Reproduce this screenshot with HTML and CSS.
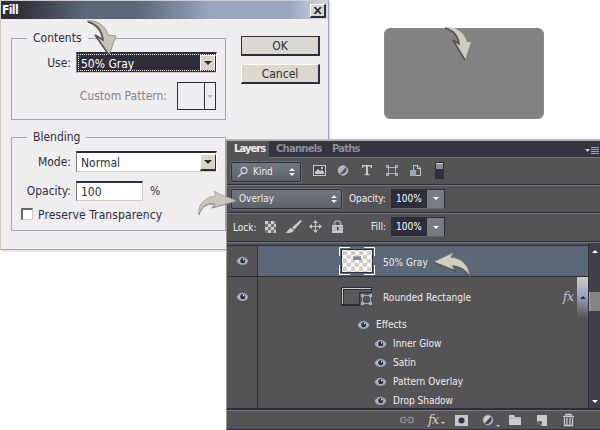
FILE: index.html
```
<!DOCTYPE html>
<html lang="en">
<head>
<meta charset="utf-8">
<title>Fill</title>
<link rel="stylesheet" href="styles.css">
</head>
<body>
<svg class="defs" width="0" height="0">
  <defs>
    <symbol id="eye" viewBox="0 0 13 10">
      <path d="M.5 5C2 1.800 4.200 .8 6.600 .8S11 1.800 12.500 5C11 8 9 9 6.600 9S2 8 .5 5Z" fill="#98a4b5"/>
      <path d="M2 5C3 3 4.500 2.600 6.500 2.600S10 3.300 11 5C10 7 8.500 7.700 6.500 7.700S3 7 2 5Z" fill="#b9bdc4"/>
      <circle cx="6.700" cy="4.700" r="2.500" fill="#2e2d3b"/>
      <rect x="7" y="3" width="1.300" height="1.300" fill="#fff"/>
    </symbol>
    <symbol id="updown" viewBox="0 0 6 8">
      <path d="M0 3L3 0L6 3ZM0 5L3 8L6 5Z" fill="#efedf0"/>
    </symbol>
  </defs>
</svg>
<main class="desktop">
  <div class="swatch"></div>

  <section class="dialog">
    <header class="titlebar"><b>Fill</b><button class="close"><svg width="8" height="7"><path d="M.5 0L7 7M7 0L.5 7" stroke="#2e2d3b" stroke-width="1.800"/></svg></button></header>
    <div class="dialog-body">
      <div class="groups">
        <div class="group contents">
          <span class="legend">Contents</span>
          <div class="field">
            <label class="use">Use:</label>
            <div class="select picked"><span>50% Gray</span><i class="drop"></i></div>
          </div>
          <div class="field pattern">
            <label class="custom">Custom Pattern:</label>
            <div class="pattern-box"><i></i><i class="pattern-drop"></i></div>
          </div>
        </div>
        <div class="group blending">
          <span class="legend blend">Blending</span>
          <div class="field mode-row">
            <label class="mode">Mode:</label>
            <div class="select"><span>Normal</span><i class="drop"></i></div>
          </div>
          <div class="field opacity-row">
            <label class="opac">Opacity:</label>
            <div class="input">100</div><span class="percent">%</span>
          </div>
          <div class="check"><i></i><span>Preserve Transparency</span></div>
        </div>
      </div>
      <div class="buttons">
        <button class="ok">OK</button>
        <button class="cancel">Cancel</button>
      </div>
    </div>
  </section>

  <section class="panel">
    <nav class="tabs">
      <span class="active">Layers</span><span class="channels">Channels</span><span class="paths">Paths</span>
      <svg width="15" height="9"><path d="M0 2H5L2.500 5Z" fill="#d0ccc0"/><path d="M6 .5H14M6 2.500H14M6 4.500H14M6 6.500H14" stroke="#98a6c0"/></svg>
    </nav>
    <div class="bar filter">
      <div class="combo kind">
        <svg width="12" height="12"><circle cx="7" cy="4.500" r="3" fill="none" stroke="#d0d2d8" stroke-width="1.300"/><path d="M5 7L1 11" stroke="#d0d2d8" stroke-width="1.500"/></svg>
        <span>Kind</span><svg class="ud" width="6" height="8"><use href="#updown"/></svg>
      </div>
      <svg class="filters" width="140" height="20">
        <rect x=".5" y="4.500" width="12" height="10" fill="#484955" stroke="#c5c6c8"/><path d="M2 13V11L5 8L7 10L9 9L11 11V13Z" fill="#c5c6c8"/><rect x="8" y="6" width="2" height="2" fill="#c5c6c8"/>
        <circle cx="30" cy="9.500" r="4.700" fill="#aeb4c0" stroke="#bcc0c8"/><path d="M33 6A5 5 0 0 1 27 13Z" fill="#555560"/>
        <path d="M49 4H59V7H58L57.500 5.500H55V13H56.500V14.200H51.500V13H53V5.500H50.500L50 7H49Z" fill="#c9c7c2"/>
        <path d="M75.500 6.500H82.500V12.500H75.500Z" fill="none" stroke="#a7aeba"/><path d="M73.500 4.500H75.500V6.500H73.500ZM82.500 4.500H84.500V6.500H82.500ZM73.500 12.500H75.500V14.500H73.500ZM82.500 12.500H84.500V14.500H82.500Z" fill="#555355" stroke="#c7c5c0"/>
        <path d="M100.500 4.500H105L107.500 7V14.500H100.500ZM104.500 4.500V7.500H107.500" fill="none" stroke="#c5c6c8"/><rect x="97" y="9" width="6" height="6" fill="#98a6c0"/>
        <rect x="122" y="1" width="9" height="17" fill="#30303c"/><path d="M123 2H130V8H123Z" fill="#8d8c90"/><path d="M123 2.500H130" stroke="#d0ccc0"/>
      </svg>
    </div>
    <div class="bar blend-bar">
      <div class="combo overlay"><span>Overlay</span><svg class="ud" width="6" height="8"><use href="#updown"/></svg></div>
      <label class="p-opacity">Opacity:</label>
      <div class="value"><span>100%</span><i></i></div>
    </div>
    <div class="bar lock-bar">
      <label class="lock">Lock:</label>
      <svg class="locks" width="82" height="20">
        <rect x="2" y="4" width="11" height="12" fill="#73757c"/><path d="M2 4H5V7H2ZM8 4H11V7H8ZM5 7H8V10H5ZM11 7H13V10H11ZM2 10H5V13H2ZM8 10H11V13H8ZM5 13H8V16H5ZM11 13H13V16H11Z" fill="#d0ccc0"/>
        <path d="M37.500 3L39 4L31.500 12.500L29 10.500Z" fill="#c9cace"/><path d="M28 11L31 13C30 16 26 16.500 22 15.500C25 15 25 12 28 11Z" fill="#d0ccc0"/>
        <path d="M52.500 4V15M46.500 9.500H58.500" stroke="#c5c6c8"/><path d="M50 6L52.500 3L55 6ZM50 13L52.500 16L55 13ZM49 7V12L46 9.500ZM56 7V12L59 9.500Z" fill="#c5c6c8"/>
        <path d="M71.500 9V6Q71.500 4 74.500 4T77.500 6V9" fill="none" stroke="#98a6c0" stroke-width="1.700"/><rect x="69" y="8" width="11" height="8" fill="#c9c7c2"/><path d="M69 10H80M69 13H80" stroke="#98a6c0"/><path d="M74 10H75.500V13H74Z" fill="#2e2d3b"/>
      </svg>
      <label class="fill">Fill:</label>
      <div class="value"><span>100%</span><i></i></div>
    </div>
    <div class="layers">
      <div class="list">
        <div class="layer selected">
          <div class="eye-cell"><svg width="13" height="10"><use href="#eye"/></svg></div>
          <svg class="thumb" width="36" height="28">
            <defs><pattern id="checker" width="8" height="8" patternUnits="userSpaceOnUse"><rect width="8" height="8" fill="#fbfaf8"/><path d="M0 0H4V4H0ZM4 4H8V8H4Z" fill="#d0ccc0"/></pattern></defs>
            <path d="M.5 9V.5H11M25 .5H35.500V9M35.500 18V27.500H25M11 27.500H.5V18" fill="none" stroke="#fff"/>
            <rect x="2.500" y="2.500" width="31" height="23" fill="url(#checker)" stroke="#2e2d3b"/><rect x="14" y="9" width="8" height="4" fill="#858995"/><path d="M14 9.500H22" stroke="#98a6c0"/>
          </svg>
          <span class="name">50% Gray</span>
        </div>
        <div class="layer shape">
          <div class="eye-cell"><svg width="13" height="10"><use href="#eye"/></svg></div>
          <svg class="thumb" width="36" height="24">
            <rect x="2" y="2" width="31" height="19" fill="#2e2d3b"/><path d="M3.500 19V3.500H32" fill="none" stroke="#d0ccc0"/><rect x="5" y="5" width="27" height="14" fill="#59585d"/><path d="M20 7H35V23H20Z" fill="#555355"/><path d="M20.500 21V7.500H33" fill="none" stroke="#2e2d3b"/>
            <path d="M23.500 10.500H31.500V18.500H23.500Z" fill="#555355" stroke="#98a6c0"/><path d="M22.500 9.500H24.500V11.500H22.500ZM30.500 9.500H32.500V11.500H30.500ZM22.500 17.500H24.500V19.500H22.500ZM30.500 17.500H32.500V19.500H30.500Z" fill="#8d8c90" stroke="#b8bfcc"/>
          </svg>
          <span class="name">Rounded Rectangle</span><em class="fx">fx</em><i class="expander"></i>
        </div>
        <div class="effect parent"><svg width="13" height="10"><use href="#eye"/></svg><span>Effects</span></div>
        <div class="effect"><svg width="13" height="10"><use href="#eye"/></svg><span>Inner Glow</span></div>
        <div class="effect"><svg width="13" height="10"><use href="#eye"/></svg><span>Satin</span></div>
        <div class="effect"><svg width="13" height="10"><use href="#eye"/></svg><span>Pattern Overlay</span></div>
        <div class="effect"><svg width="13" height="10"><use href="#eye"/></svg><span>Drop Shadow</span></div>
      </div>
      <div class="scroll"><i class="up"></i><i class="grip"></i><i class="down"></i></div>
    </div>
    <footer class="footer">
      <svg width="14" height="10"><path d="M6 2.500H3Q.8 2.500 .8 5T3 7.500H6M8 2.500H11Q13.200 2.500 13.200 5T11 7.500H8M4 5H10" fill="none" stroke="#8d8c90" stroke-width="1.500"/></svg>
      <em class="foot-fx">fx</em>
      <svg class="tools" width="126" height="14">
        <rect x="0" y="2" width="13" height="11" fill="#c5c7cb"/><circle cx="6.500" cy="7.500" r="3" fill="#343441"/>
        <circle cx="33" cy="7" r="4.800" fill="#d0ccc0" stroke="#98a6c0"/><path d="M36 3.500A5 5 0 0 1 29.500 10.500Z" fill="#454553"/><path d="M41 12H45L43 14Z" fill="#d0ccc0"/>
        <path d="M54 2H59L60 4H66V12H54Z" fill="#c9cbd0"/><path d="M55 5H66" stroke="#98a6c0"/>
        <path d="M82 2H92V13H87V8H82Z" fill="#c9c9c8"/><path d="M82 8H87V13Z" fill="#2e2d3b" stroke="#d0ccc0" stroke-width=".7"/>
        <path d="M108 3.500H119M111 3V1.500H116V3" fill="none" stroke="#c9cace" stroke-width="1.300"/><path d="M109.500 5V12.500H117.500V5M112 5V12M115 5V12" fill="none" stroke="#c9cace" stroke-width="1.300"/>
      </svg>
    </footer>
  </section>

  <svg class="arrow to-use" width="34" height="38" viewBox="0 0 34 38"><path d="M1 1C9 0 19 4 22 15L30 16L23 35L9 15L16 19C15 11 9 5 1 1Z" fill="#c6c2b8" stroke="#98968f"/><path d="M2 2C10 4 16 10 17 20L9 15L23 35" fill="none" stroke="#555355" stroke-width="1.500"/></svg>
  <svg class="arrow to-swatch" width="32" height="37" viewBox="0 0 32 37"><path d="M1 1C12 0 21 5 24 16L28 16L22 34L10 14L16 18C16 9 9 4 1 1Z" fill="#d0ccc0"/><path d="M2 2C9 4 15 9 16 18L10 14L22 34" fill="none" stroke="#555355" stroke-width="1.600"/></svg>
  <svg class="arrow to-overlay" width="40" height="30" viewBox="0 0 40 30"><path d="M2 27C0 17 8 9 19 8L17 3C24 8 32 9 39 13L15 20L18 16C10 15 4 19 2 27Z" fill="#cbc7bc" stroke="#aaa8a5"/><path d="M2 27C4 19 10 15 18 16L15 20L39 13" fill="none" stroke="#8d8c90"/></svg>
  <svg class="arrow to-layer" width="42" height="29" viewBox="0 0 42 29"><path d="M2 12L23 2L20 7C30 8 38 14 39 27C35 20 30 17 22 16L25 21Z" fill="#d0ccc0" stroke="#6d6e72"/><path d="M2 12L25 21L22 16C30 17 35 20 39 27" fill="none" stroke="#555355" stroke-width="1.200"/></svg>
</main>
</body>
</html>
```
FILE: styles.css
```
* { box-sizing: border-box; }
body { margin: 0; background: #fff; font: 12px/14px "DejaVu Sans Condensed", "DejaVu Sans", sans-serif; color: #2e2d3b; }
.desktop { position: relative; width: 600px; height: 430px; overflow: hidden; background: #fff; }
.defs { position: absolute; }
svg { display: block; flex: none; }
i { display: block; flex: none; }
span, label { white-space: nowrap; }
button { font: inherit; color: inherit; padding: 0; }
.swatch { position: absolute; left: 384px; top: 28px; width: 160px; height: 91px; border-radius: 6px; background: #828282; border: 1px solid #878b91; }

/* Fill dialog */
.dialog { position: absolute; left: 0; top: 0; width: 329px; height: 250px; background: #efedf0; border: 1px solid #d0ccc0; border-right-color: #98a6c0; border-bottom-color: #98a6c0; box-shadow: 1px 1px 2px #d0ccc0; }
.titlebar { display: flex; align-items: center; justify-content: space-between; height: 18px; padding: 0 2px 0 1px; background: linear-gradient(90deg, #2e2d3b 5%, #5b6878 26%, #5b6878 42%, #98a6c0 64%, #98a6c0 88%, #d5d9e3); color: #fff; }
.titlebar b { font-size: 12px; letter-spacing: -.6px; }
.close { display: flex; align-items: center; justify-content: center; width: 16px; height: 14px; margin-top: 1px; background: #d8d4ca; border: 1px solid #fff; border-right: 2px solid #2e2d3b; border-bottom: 2px solid #2e2d3b; }
.dialog-body { display: flex; padding: 17px 0 0 10px; }
.groups { display: flex; flex-direction: column; gap: 17px; width: 215px; }
.group { border: 1px solid #98a6c0; }
.contents { height: 82px; margin-top: 2px; }
.blending { height: 94px; }
.legend { display: block; width: 61px; height: 14px; margin: -8px 0 0 15px; padding-left: 6px; background: #efedf0; font-size: 12px; }
.blend { width: 59px; }
.field { display: flex; align-items: center; height: 21px; margin-top: 7px; }
.field label { width: 64px; padding-right: 5px; text-align: right; }
.select { display: flex; width: 141px; height: 21px; align-items: center; justify-content: space-between; padding-left: 4px; background: #fff; border: 2px solid #2e2d3b; border-left: 1px solid #777; border-right: 1px solid #fff; border-bottom: 1px solid #d0ccc0; }
.select span { padding-top: 2px; }
.picked { color: #fff; background: #2e2d3b; outline: 1px dotted #fff; outline-offset: -3px; }
.drop { width: 16px; height: 17px; background: #d8d4ca; border: 1px solid #fff; border-right-color: #2e2d3b; border-bottom: 2px solid #2e2d3b; display: grid; place-items: center; }
.drop::before, .pattern-drop::before, .value i::before { content: ""; border: 4px solid transparent; border-top-color: #2e2d3b; border-bottom: 0; }
.field.pattern { height: 28px; margin-top: 9px; }
.field .custom { width: 155px; padding: 0; margin-right: 10px; color: #858387; }
.pattern-box { display: flex; width: 39px; height: 28px; border: 1px solid #2e2d3b; }
.pattern-box i:first-child { width: 27px; border-right: 1px solid #2e2d3b; }
.pattern-drop { display: grid; place-items: center; width: 10px; }
.pattern-drop::before { border-width: 3px 3px 0; border-top-color: #b8b7b9; }
.opacity-row { margin-top: 8px; }
.input { width: 67px; height: 20px; padding: 2px 0 0 4px; background: #fff; border: 2px solid #2e2d3b; border-left: 1px solid #777; border-right: 1px solid #d0ccc0; border-bottom: 1px solid #d0ccc0; }
.percent { margin-left: 7px; }
.check { display: flex; align-items: center; gap: 5px; height: 14px; margin: 6px 0 0 9px; }
.check span { letter-spacing: .1px; padding-top: 1px; }
.check i { width: 12px; height: 12px; border: 1px solid #d0ccc0; border-top: 2px solid #666570; border-left: 2px solid #666570; background: #fff; }
.buttons { display: flex; flex-direction: column; gap: 8px; width: 79px; margin: 0 0 0 15px; }
.buttons button { height: 20px; background: #dbd8d0; border: 1px solid #fff; border-right: 2px solid #2e2d3b; border-bottom: 2px solid #2e2d3b; }
.buttons .ok { border-top-color: #2e2d3b; border-left-color: #2e2d3b; }

/* Layers panel */
.panel { position: absolute; left: 226px; top: 139px; width: 374px; height: 291px; display: flex; flex-direction: column; background: #555355; border-left: 1px solid #98988f; border-top: 2px solid #b5b4b0; border-bottom: 1px solid #2e2d3b; color: #efedf0; font-size: 10px; line-height: 12px; }
.panel > * { flex: none; }
.tabs { display: flex; height: 17px; background: #353441; border-bottom: 1px solid #6f727b; font-family: "DejaVu Sans", sans-serif; font-weight: bold; color: #8c8d96; }
.tabs span { padding-top: 2px; }
.tabs .active { width: 42px; height: 17px; padding-left: 7px; background: #555355; color: #efedf0; letter-spacing: -.95px; }
.tabs .channels { width: 57px; padding-left: 7px; letter-spacing: -.75px; }
.tabs .paths { padding-left: 6px; letter-spacing: -.8px; }
.tabs svg { margin: 6px 0 0 auto; }
.bar { display: flex; align-items: center; height: 28px; border-bottom: 1px solid #2e2d3b; box-shadow: 0 1px #74777f; }
.bar.filter { height: 27px; }
.combo { display: flex; align-items: center; height: 20px; background: linear-gradient(#747780, #5b606a); border: 1px solid #2e2d3b; box-shadow: 0 0 0 1px #656a73; border-radius: 2px; }
.kind { width: 70px; margin: 1px 0 0 4px; padding: 0 5px; }
.kind span { margin-left: 4px; }
.ud { margin-left: auto; }
.filters { margin-left: 12px; }
.overlay { width: 111px; margin-left: 4px; padding: 0 4px 0 7px; }
.p-opacity { width: 42px; padding-left: 7px; }
.value { display: flex; width: 54px; height: 20px; margin-left: auto; margin-right: 155px; background: #2e2d3b; border: 1px solid #2e2d3b; border-bottom-color: #5b6878; color: #fff; }
.value span { width: 36px; padding: 3px 0 0 4px; }
.value i { display: grid; place-items: center; width: 17px; background: #777b82; }
.value i::before { border-width: 3px 3px 0; border-top-color: #fff; }
.bar.lock-bar { height: 29px; }
.lock { width: 36px; padding-left: 6px; padding-top: 2px; }
.fill { margin-left: 26px; }
.layers { display: flex; height: 168px; padding-top: 3px; border-bottom: 2px solid #2e2d3b; box-shadow: 0 1px #777b84; }
.list { width: 361px; border-top: 1px solid #2e2d3b; background: linear-gradient(90deg, transparent 30px, #2e2d3b 30px, #2e2d3b 31px, transparent 31px); }
.layer { display: flex; align-items: center; height: 31px; }
.selected { border-bottom: 1px solid #2e2d3b; background: linear-gradient(90deg, #555355 30px, #2e2d3b 30px, #2e2d3b 31px, #5b6878 31px); }
.eye-cell { width: 30px; padding-left: 9px; }
.thumb { margin-left: 82px; }
.name { margin-left: 8px; padding-top: 3px; letter-spacing: .05px; }
.layer.shape { height: 39px; }
.fx { margin-left: auto; margin-right: 4px; font: italic 13px/16px "DejaVu Serif", serif; color: #bbc1cd; letter-spacing: -1px; }
.expander { align-self: flex-start; width: 11px; height: 41px; background: linear-gradient(#d0ccc0, #98a6c0 45%, #555355); display: grid; place-items: center; }
.expander::before { content: ""; border: 3px solid transparent; border-bottom-color: #2e2d3b; border-top: 0; }
.effect { display: flex; align-items: center; height: 19px; padding-left: 147px; }
.effect.parent { padding-left: 130px; height: 18px; }
.effect span { margin-left: 6px; }
.scroll { width: 12px; margin-top: -2px; display: flex; flex-direction: column; align-items: center; background: #41404b; border-left: 1px solid #2e2d3b; }
.up { margin-top: 7px; border: 3px solid transparent; border-bottom-color: #fff; border-top: 0; }
.grip { width: 11px; height: 19px; margin-top: 39px; background: #858387; border-left: 1px solid #98a6c0; }
.down { margin: auto 0 5px; border: 3px solid transparent; border-top-color: #fff; border-bottom: 0; }
.footer { display: flex; align-items: center; height: 19px; padding: 1px 0 0 173px; }
.foot-fx { width: 27px; margin-left: 14px; font: italic 13px/16px "DejaVu Serif", serif; color: #d0ccc0; letter-spacing: -1px; }
.foot-fx::after { content: ""; display: inline-block; margin-left: 3px; border: 2px solid transparent; border-top-color: #d0ccc0; border-bottom: 0; }
.arrow { position: absolute; }
.to-use { left: 86px; top: 20px; }
.to-swatch { left: 443px; top: 26px; }
.to-overlay { left: 197px; top: 188px; }
.to-layer { left: 431px; top: 250px; }
```
